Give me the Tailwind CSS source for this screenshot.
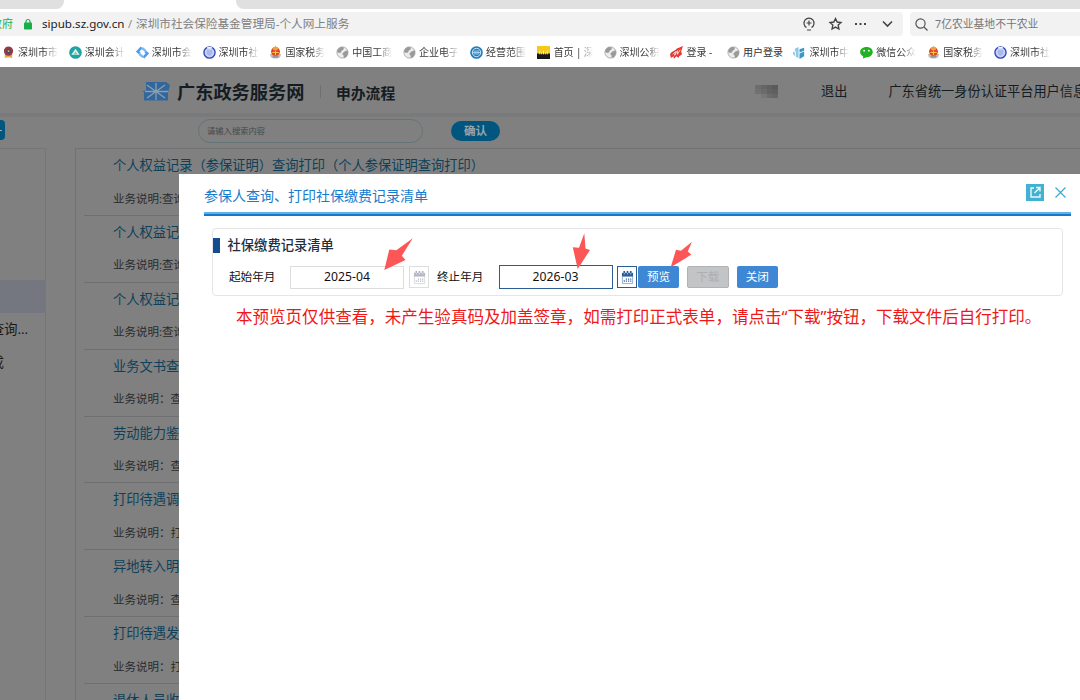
<!DOCTYPE html>
<html lang="zh-CN">
<head>
<meta charset="utf-8">
<title>深圳市社会保险基金管理局-个人网上服务</title>
<script src="https://cdn.jsdelivr.net/npm/@tailwindcss/browser@4"></script>
</head>
<body class="h-[700px] w-[1080px] overflow-hidden bg-white font-['Noto_Sans','Noto_Sans_CJK_SC',sans-serif] text-[#222]">
<svg class="hidden">
  <defs>
    <symbol id="globe" viewBox="0 0 14 14"><circle cx="7" cy="7" r="6" fill="#ededed" stroke="#a8a8a8" stroke-width="1"/><path d="M2 3.500C4 .8 7 .8 8.500 1.800L8 4 6 5 5.500 7 3 7.500 1 6ZM9 6l3.500-1.500L13 8l-2 4-2.500 1-.5-3-1.500-1.500Z" fill="#9a9a9a"/></symbol>
    <symbol id="tax" viewBox="0 0 14 14"><path d="M1 8.500h12L12 12l-3 1.500H5L2 12Z" fill="#c5bcae"/><circle cx="7" cy="6" r="4.800" fill="#e0442a"/><path d="M4 2.500 7 0l3 2.500-1 2H5Z" fill="#f0a13a"/><path d="M3.500 7h7M7 5v5" stroke="#ffc23d" stroke-width="1.300"/><path d="M4 10.500h6v2H4Z" fill="#8b95a5"/></symbol>
    <symbol id="ring" viewBox="0 0 14 14"><circle cx="7" cy="7" r="6" fill="#c9d3f6" stroke="#3449b4" stroke-width="1.500"/><path d="M4 4h6v4.500L7 11 4 8.500Z" fill="#a9b9ef"/><path d="M4.500 1.800h5" stroke="#fff" stroke-width="1.300"/></symbol>
    <symbol id="cal" viewBox="0 0 14 16"><path d="M1 3h12v4H1Z" fill="currentColor"/><path d="M3.500 1v3M7 1v3M10.500 1v3" stroke="currentColor" stroke-width="1.800"/><path d="M3.500 3.500v1M7 3.500v1M10.500 3.500v1" stroke="#fff" stroke-width="1"/><path d="M1.500 7v7.500h11V7" fill="none" stroke="currentColor" stroke-width=".5"/><path d="M3.500 11v2M5.800 9v4M8.200 9v4M10.500 9v4" stroke="currentColor" stroke-width="1.200" stroke-dasharray="1.500 .7"/></symbol>
  </defs>
</svg>

<header class="flex h-[67px] flex-col bg-white">
  <div class="flex h-[9px] shrink-0 justify-between">
    <div class="w-[64px] rounded-br-lg bg-[#e0e0e0]"></div>
    <div class="w-[844px] rounded-bl-lg bg-[#e0e0e0]"></div>
  </div>
  <div class="mt-[3px] flex h-[24px] shrink-0 gap-[7px]">
    <div class="flex w-[903px] items-center overflow-hidden rounded-r-sm bg-[#f2f2f2] whitespace-nowrap">
      <span class="-ml-[9px] w-[22px] text-[11px] text-[#23b04c]">政府</span>
      <svg class="ml-[11px] h-[12px] w-[8px] shrink-0" viewBox="0 0 8 12"><path d="M2 5V3.500a2 2 0 0 1 4 0V5" fill="none" stroke="#18ae48" stroke-width="1.200"/><rect y="4.500" width="8" height="7" rx=".8" fill="#18ae48"/></svg>
      <span class="ml-[10px] w-[82px] text-[11.600px] text-[#1c1c1c]">sipub.sz.gov.cn</span>
      <span class="ml-[4px] w-[8px] text-[11px] text-[#888]">/</span>
      <span class="text-[11.650px] text-[#808080]">深圳市社会保险基金管理局-个人网上服务</span>
      <svg class="mr-[9px] ml-auto h-[16px] w-[92px] shrink-0" viewBox="0 0 92 16" fill="none" stroke="#444" stroke-width="1.200"><path d="M4.500 11.500a5 5 0 1 1 5 0M7 4.500v5M4.500 7h5M5 14h4"/><path d="m33.500 2.500 1.700 3.500 3.800.5-2.800 2.600.7 3.900-3.400-1.900-3.400 1.900.7-3.900L28 6.500l3.800-.5Z" stroke-width="1.400"/><path d="M53 8h2M57.500 8h2M62 8h2" stroke-width="1.800"/><path d="m81 5.500 4.500 4.500L90 5.500" stroke-width="1.600"/></svg>
    </div>
    <div class="flex flex-1 items-center rounded-l-sm bg-[#f2f2f2] pl-[5px]">
      <svg class="h-[13px] w-[13px]" viewBox="0 0 13 13" fill="none" stroke="#555" stroke-width="1.200"><circle cx="5.500" cy="5.500" r="4.600"/><path d="m9 9 3.500 3.500"/></svg>
      <span class="ml-[7px] text-[10.800px] text-[#777]">7亿农业基地不干农业</span>
    </div>
  </div>
  <nav class="flex h-[31px] items-center pt-px pl-[2px] text-[10px] whitespace-nowrap text-[#333] [&>div]:flex [&>div]:w-[66.850px] [&>div]:shrink-0 [&>div]:items-center [&>div]:gap-[3px] [&_svg]:size-[13px] [&_svg]:shrink-0 [&_span]:w-[40px] [&_span]:overflow-hidden">
    <div><svg viewBox="0 0 14 14"><path d="M3 8h8v5l-4-1-4 1Z" fill="#e5ac4d"/><circle cx="7" cy="5.500" r="5" fill="#9c3940"/><circle cx="7" cy="5.500" r="2.500" fill="#374d85"/><circle cx="7" cy="5.500" r="1" fill="#ffbc46"/></svg><span class="bg-linear-to-r from-[#333] from-65% to-transparent bg-clip-text text-transparent">深圳市市</span></div>
    <div><svg viewBox="0 0 14 14"><circle cx="7" cy="7" r="6.800" fill="#1ca5a4"/><path d="M7 3 11.500 9.500H2.500Z" fill="#e8f2ea"/><path d="m7 6 2 3H5Z" fill="#8cb9a9"/></svg><span class="bg-linear-to-r from-[#333] from-65% to-transparent bg-clip-text text-transparent">深圳会计</span></div>
    <div><svg viewBox="0 0 14 14" fill="none" stroke-width="2.600"><path d="M6 1.500 1.800 6 4 8M8 12.500l4.200-4.500L10 6" stroke="#4d9bef"/><path d="m6.500 2 4 3.500M7.500 12l-4-3.500" stroke="#75b9f7"/></svg><span class="bg-linear-to-r from-[#333] from-65% to-transparent bg-clip-text text-transparent">深圳市会</span></div>
    <div><svg><use href="#ring"/></svg><span class="bg-linear-to-r from-[#333] from-65% to-transparent bg-clip-text text-transparent">深圳市社</span></div>
    <div><svg><use href="#tax"/></svg><span class="bg-linear-to-r from-[#333] from-65% to-transparent bg-clip-text text-transparent">国家税务</span></div>
    <div><svg><use href="#globe"/></svg><span class="bg-linear-to-r from-[#333] from-65% to-transparent bg-clip-text text-transparent">中国工商</span></div>
    <div><svg><use href="#globe"/></svg><span class="bg-linear-to-r from-[#333] from-65% to-transparent bg-clip-text text-transparent">企业电子</span></div>
    <div><svg viewBox="0 0 14 14"><circle cx="7" cy="7" r="6.800" fill="#247dbb"/><circle cx="7" cy="7" r="4.500" fill="none" stroke="#d4ecfc" stroke-width="1"/><path d="M2.500 7h9M4 5.500h6M4 8.500h6" stroke="#d4ecfc" stroke-width=".8"/></svg><span class="bg-linear-to-r from-[#333] from-65% to-transparent bg-clip-text text-transparent">经营范围</span></div>
    <div><svg viewBox="0 0 14 14"><path d="M0 0h14v8H0Z" fill="#f5c81b"/><path d="M0 8h14v6H0Z" fill="#181818"/><path d="M3 5v4M5 7v2M7 5v4M9 7v2M11 5v4" fill="none" stroke="#fff3b5" stroke-width="1"/></svg><span class="bg-linear-to-r from-[#333] from-65% to-transparent bg-clip-text pl-[1px] tracking-[-.15px] text-transparent">首页 | 深</span></div>
    <div><svg><use href="#globe"/></svg><span class="bg-linear-to-r from-[#333] from-65% to-transparent bg-clip-text text-transparent">深圳公积</span></div>
    <div class="!w-[56.500px]"><svg viewBox="0 0 14 14"><path d="M0 9C2 5 5 6 7 3L14 0l-2 6 1 3-3 2-1 2-2-2-3 3v-3l-3 2Z" fill="#e83a32"/><path d="m3 9 3-3-1 4 3-5v4l3-5" fill="none" stroke="#fff" stroke-width=".8"/></svg><span class="bg-linear-to-r from-[#333] from-60% to-[#bbb] bg-clip-text text-transparent">登录 -</span></div>
    <div class="!w-[66.500px]"><svg><use href="#globe"/></svg><span>用户登录</span></div>
    <div><svg viewBox="0 0 14 14"><path d="m2 3 4-2v12l-3-1.500V5.500L2 6ZM0 6l2 1v4L0 9Z" fill="#8bc8ea"/><path d="m7 3.500 5-1.500v3L7 7Zm0 4.500 5-2v5l-5 3Z" fill="#3c99c7"/></svg><span class="bg-linear-to-r from-[#333] from-65% to-transparent bg-clip-text text-transparent">深圳市中</span></div>
    <div><svg viewBox="0 0 14 14"><path d="M7 1c9 0 9 11 0 11l-4 1.500.5-2.500C-2.500 8 0 1 7 1Z" fill="#20b320"/><circle cx="4.500" cy="5" r="1" fill="#fff"/><circle cx="9.500" cy="5" r="1" fill="#fff"/></svg><span class="bg-linear-to-r from-[#333] from-65% to-transparent bg-clip-text text-transparent">微信公众</span></div>
    <div><svg><use href="#tax"/></svg><span class="bg-linear-to-r from-[#333] from-65% to-transparent bg-clip-text text-transparent">国家税务</span></div>
    <div><svg><use href="#ring"/></svg><span class="bg-linear-to-r from-[#333] from-65% to-transparent bg-clip-text text-transparent">深圳市社</span></div>
  </nav>
</header>

<div class="relative h-[633px] overflow-hidden bg-[#808080]">
  <div class="flex h-[50px] items-center border-b-4 border-[#797a7b] pt-[3px] pl-[142px] whitespace-nowrap text-[#151c22]">
    <svg class="h-[19px] w-[28px] shrink-0" viewBox="0 0 28 19"><path d="M4 0h20l4 3-1.500 6H26v9.500H2V10H0L4 8Z" fill="#33669a"/><path d="M14 1v17M3 9.500h23M5 3l18 13M23 3 5 16" stroke="#8c9fb0" stroke-width="1.300"/></svg>
    <h1 class="ml-[7px] w-[143px] shrink-0 text-[18.200px] leading-[26px] font-bold">广东政务服务网</h1>
    <i class="h-[13px] w-px shrink-0 bg-[#6e7072]"></i>
    <b class="ml-[15px] w-[60px] shrink-0 pt-[2px] text-[14.800px] leading-[24px]">申办流程</b>
    <div class="ml-[359px] grid h-[14px] w-[23px] shrink-0 grid-cols-4 grid-rows-3"><i class="bg-[#6d6d6d]"></i><i class="bg-[#656565]"></i><i class="bg-[#5f6061]"></i><i class="bg-[#595a5a]"></i><i class="bg-[#717171]"></i><i class="bg-[#6b6b6b]"></i><i class="bg-[#626363]"></i><i class="bg-[#5e5f5f]"></i><i></i><i class="bg-[#777]"></i><i class="bg-[#6c6c6c]"></i><i class="bg-[#666]"></i></div>
    <span class="ml-[43px] shrink-0 pt-px text-[13.200px]">退出</span>
    <span class="ml-[41px] shrink-0 pt-px text-[13.200px]">广东省统一身份认证平台用户信息</span>
  </div>
  <div class="flex h-[31px] items-start">
    <div class="mt-[3px] flex h-[20px] w-[5px] items-center rounded-r bg-[#015680]"><i class="h-px w-[2px] bg-[#aaa]"></i></div>
    <div class="mt-[2px] ml-[193px] flex h-[24px] w-[225px] items-center rounded-full border border-[#647477] pl-[8px] text-[8.300px] text-[#46494b]">请输入搜索内容</div>
    <div class="mt-[3.500px] ml-[28px] flex h-[20px] w-[49px] items-center justify-center rounded-full bg-[#015680] text-[11.600px] font-bold text-[#98a5ab]">确认</div>
  </div>
  <div class="flex h-[552px] whitespace-nowrap">
    <aside class="w-[46px] shrink-0 overflow-hidden border-t border-r border-[#757677] pt-[131px] text-[13.200px] text-[#171717]">
      <div class="h-[33px] bg-[#757780]"></div>
      <div class="flex h-[33px] w-[28px] items-center justify-end">查询...</div>
      <div class="flex h-[33px] w-[4px] items-center justify-end">成</div>
    </aside>
    <main class="ml-[29px] flex-1 border-t border-l border-[#707172] pl-[8px] text-[13.250px] text-[#0e4059] [&>section]:h-[66.900px] [&>section]:border-b [&>section]:border-[#6e6f70] [&>section]:pl-[29px] [&_h2]:h-[33px] [&_h2]:pt-[6px] [&_h2]:leading-[20px] [&_p]:pt-[6.500px] [&_p]:text-[11.500px] [&_p]:leading-[20px] [&_p]:text-[#2b2b2b]">
      <section><h2>个人权益记录（参保证明）查询打印（个人参保证明查询打印）</h2><p>业务说明:查询打印</p></section>
      <section><h2>个人权益记录</h2><p>业务说明:查询打印</p></section>
      <section><h2>个人权益记录</h2><p>业务说明:查询打印</p></section>
      <section><h2>业务文书查询</h2><p>业务说明：查询</p></section>
      <section><h2>劳动能力鉴定</h2><p>业务说明：查询</p></section>
      <section><h2>打印待遇调整</h2><p>业务说明：打印</p></section>
      <section><h2>异地转入明细</h2><p>业务说明：查询</p></section>
      <section><h2>打印待遇发放</h2><p>业务说明：打印</p></section>
      <section><h2>退休人员收</h2></section>
    </main>
  </div>

  <div role="dialog" class="absolute top-[106.500px] left-[179px] h-[530px] w-[901px] bg-white pr-[9px] pl-[25px]">
    <div class="flex h-[40px] items-center border-b-2 border-[#62b0e5] pr-[5px]">
      <h2 class="flex-1 pt-[5px] text-[14px] text-[#187bcd]">参保人查询、打印社保缴费记录清单</h2>
      <svg class="h-[17px] w-[18px]" viewBox="0 0 18 17"><path d="M0 0h18v17H0Z" fill="#42b1d2"/><path d="M8 4H5v9h9v-3M8.500 9l5-5M10 3.500h4v4" fill="none" stroke="#eaf8fc" stroke-width="1.400"/></svg>
      <svg class="ml-[11px] h-[11px] w-[11px]" viewBox="0 0 11 11"><path d="m.5.5 10 10M10.500.5l-10 10" stroke="#42acd0" stroke-width="1.300"/></svg>
    </div>
    <div class="h-[2.500px] bg-[#1479cc]"></div>
    <div class="mt-[12px] mr-[8px] ml-[8px] h-[68px] rounded border border-[#e5e5e5] pt-[5px]">
      <div class="flex h-[23px] items-center"><i class="h-[15px] w-[7px] bg-[#134d91]"></i><h3 class="ml-[7.500px] text-[13.300px] font-medium text-[#1f2f3f]">社保缴费记录清单</h3></div>
      <div class="mt-[8px] flex h-[24px] items-center pl-[16px] text-[11.600px] text-[#111]">
        <span class="w-[61px]">起始年月</span>
        <div class="flex h-[23px] w-[114px] items-center justify-center border border-[#ddd] text-[12.200px]">2025-04</div>
        <div class="ml-[5px] flex h-[22px] w-[20px] items-center justify-center border border-[#ddd] text-[#b5b5c6]"><svg class="h-[15px] w-[13px]"><use href="#cal"/></svg></div>
        <span class="ml-[8px] w-[61.500px]">终止年月</span>
        <div class="flex h-[24px] w-[114px] items-center justify-center border border-[#2b5c94] text-[12.200px]">2026-03</div>
        <div class="ml-[4.500px] flex h-[22px] w-[20px] items-center justify-center border border-[#2b5c94] text-[#285e9a]"><svg class="h-[15px] w-[13px]"><use href="#cal"/></svg></div>
        <div class="ml-px flex h-[22px] w-[41px] items-center justify-center rounded-xs bg-[#3e87d5] text-white">预览</div>
        <div class="ml-[8px] flex h-[22px] w-[41.500px] items-center justify-center rounded-xs border border-[#b0b2b5] bg-[#c3c4c6] text-[#adafb1]">下载</div>
        <div class="ml-[8px] flex h-[22px] w-[41.500px] items-center justify-center rounded-xs bg-[#3e87d5] text-white">关闭</div>
      </div>
    </div>
    <p class="mt-[8.500px] ml-[32px] text-[16.550px] leading-[24px] whitespace-nowrap text-[#ef1717]">本预览页仅供查看，未产生验真码及加盖签章，如需打印正式表单，请点击“下载”按钮，下载文件后自行打印。</p>
  </div>

  <svg class="absolute top-[163px] left-[370px] h-[50px] w-[340px]" viewBox="370 230 340 50" fill="#fc5656"><path d="m384.300 270 5-20.500 7 .8 16.500-12-11 17.500 3.700 4.200Z"/><path d="m577.700 269-4.900-21.700 6.200.4 5.300-14.400 1.200 15.200 4.500 1.500Z"/><path d="m670.700 267.300 5.300-17.600 5 1 11-9-4.300 9.800 3.600 3-5.300 3.500Z"/></svg>
</div>
</body>
</html>
